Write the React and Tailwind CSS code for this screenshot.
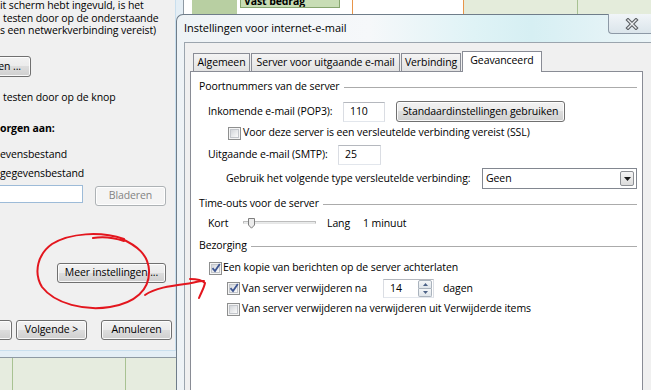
import React from 'react';

function Btn({ children, className = '', disabled = false }) {
  return (
    <div
      className={`flex shrink-0 items-center justify-center whitespace-nowrap rounded-[3px] border ${
        disabled
          ? 'border-[#adb2b5] bg-[#f4f4f4] text-[#838383]'
          : 'border-[#707070] bg-[linear-gradient(#f2f2f2_0%,#ebebeb_49%,#dddddd_50%,#cfcfcf_100%)] text-black'
      } shadow-[inset_0_0_0_1px_rgba(255,255,255,0.85)] ${className}`}
    >
      {children}
    </div>
  );
}

function Check({ checked }) {
  return (
    <span className="flex h-[13px] w-[13px] shrink-0 items-center justify-center border border-[#8e8f8f] bg-[#f4f4f4]">
      <span className="relative block h-[9px] w-[9px] border border-[#c3c6cb] bg-[linear-gradient(135deg,#d3d6da,#fbfbfb)]">
        {checked && (
          <svg className="absolute left-[-1px] top-[-2px] overflow-visible" width="10" height="10" viewBox="0 0 10 10">
            <path d="M1.5 5.2 L4 8 L8.8 1" fill="none" stroke="#3d5591" strokeWidth="1.8" />
          </svg>
        )}
      </span>
    </span>
  );
}

function Field({ value, className = '' }) {
  return (
    <div className={`flex shrink-0 items-center border border-[#b5b8be] border-x-[#dadde3] border-b-[#e2e6ec] bg-white ${className}`}>
      {value}
    </div>
  );
}

function GroupHeader({ title, className = '' }) {
  return (
    <div className={`flex h-[16px] items-center gap-[4px] pl-[8px] pr-[5px] ${className}`}>
      <span className="whitespace-nowrap">{title}</span>
      <span className="h-px flex-1 bg-[#ababab]" />
    </div>
  );
}

function LeftWizard() {
  return (
    <div className="absolute left-0 top-0 h-[358px] w-[184px] border-b border-r border-[#8e99a3] bg-[#e4eef5]">
      <div className="flex h-[351px] w-[176px] flex-col overflow-hidden whitespace-nowrap border-b border-r border-[#c9dfee] bg-[#f0f0f0]">
        <div className="-mt-px leading-[12.5px]">
          <div>it scherm hebt ingevuld, is het</div>
          <div className="pl-[3px]">testen door op de onderstaande</div>
          <div>s een netwerkverbinding vereist)</div>
        </div>
        <Btn className="-ml-[40px] mt-[19.5px] h-[21px] w-[71px] !justify-end pr-[9px]">en ...</Btn>
        <div className="mt-[13.5px] pl-[3px] leading-[13px]">testen door op de knop</div>
        <div className="mt-[18px] font-bold leading-[13px]">orgen aan:</div>
        <div className="mt-[13px] leading-[13px]">evensbestand</div>
        <div className="mt-[6px] leading-[13px]">gegevensbestand</div>
        <div className="mt-[5.5px] flex items-start">
          <div className="-ml-[20px] h-[18px] w-[103px] border border-[#9dbbd8] bg-white" />
          <Btn disabled className="ml-[12px] mt-px h-[20px] w-[71px]">Bladeren</Btn>
        </div>
        <Btn className="ml-[57px] mt-[57px] h-[20px] w-[109px]">Meer instellingen ...</Btn>
        <div className="mt-[37px] flex">
          <Btn className="-ml-[60px] h-[20px] w-[72px]">&lt; Vorige</Btn>
          <Btn className="ml-[4px] h-[20px] w-[71px]">Volgende &gt;</Btn>
          <Btn className="ml-[14px] h-[20px] w-[71px]">Annuleren</Btn>
        </div>
      </div>
    </div>
  );
}

function MailSettings() {
  return (
    <div className="absolute left-[176px] top-[14px] flex h-[380px] w-[480px] flex-col rounded-tl-[7px] border-l border-t border-[#6f7d8a] bg-[linear-gradient(90deg,#eef3f6_0%,#f6f8fa_40%,#dff3f6_62%,#d6eff3_74%,#edf5f8_100%)]">
      <div className="flex h-[27px] shrink-0 items-center whitespace-nowrap pl-[7px] text-[11px] tracking-[-0.05px]">Instellingen voor internet-e-mail</div>
      <div className="absolute left-[431px] top-[-1px] flex h-[20px] w-[47px] items-center justify-center rounded-bl-[4px] border-b border-l border-[#8d99a6] bg-[linear-gradient(#f1f5f8,#dbe5eb)]">
        <svg width="14" height="12" viewBox="0 0 14 12">
          <path d="M3 2 L11 10 M11 2 L3 10" stroke="#5b5f63" strokeWidth="3.6" strokeLinecap="square" />
          <path d="M3 2 L11 10 M11 2 L3 10" stroke="#eceff1" strokeWidth="1.4" strokeLinecap="square" />
        </svg>
      </div>

      <div className="ml-[7px] flex flex-1 flex-col border-l border-t border-[#9ba5ae] bg-[#f0f0f0] pl-[5px] pt-[10px]">
        <div className="relative z-10 ml-[3px] flex h-[18px] items-end gap-px whitespace-nowrap">
          <div className="flex h-[18px] w-[57px] items-center justify-center border-x border-t border-[#898c95] bg-[linear-gradient(#f4f4f4,#e2e2e2)]">Algemeen</div>
          <div className="flex h-[18px] w-[149px] items-center justify-center border-x border-t border-[#898c95] bg-[linear-gradient(#f4f4f4,#e2e2e2)]">Server voor uitgaande e-mail</div>
          <div className="flex h-[18px] w-[60px] items-center justify-center border-x border-t border-[#898c95] bg-[linear-gradient(#f4f4f4,#e2e2e2)]">Verbinding</div>
          <div className="-mb-px flex h-[21px] w-[80px] items-center justify-center border-x border-t border-[#898c95] bg-white pb-[2px]">Geavanceerd</div>
        </div>

        <div className="flex w-[453px] flex-1 flex-col whitespace-nowrap border border-[#898c95] bg-white">
          <GroupHeader title="Poortnummers van de server" className="mt-[7px]" />

          <div className="mt-[6px] flex h-[21px] items-center">
            <div className="w-[152px] pl-[17px]">Inkomende e-mail (POP3):</div>
            <Field value="110" className="h-[20px] w-[42px] pl-[6px]" />
            <Btn className="ml-[11px] h-[21px] w-[169px]">Standaardinstellingen gebruiken</Btn>
          </div>

          <div className="mt-[2px] flex h-[18px] items-center gap-[2px] pl-[37px]">
            <Check />
            <span>Voor deze server is een versleutelde verbinding vereist (SSL)</span>
          </div>

          <div className="mt-[3px] flex h-[20px] items-center">
            <div className="w-[147px] pl-[17px]">Uitgaande e-mail (SMTP):</div>
            <Field value="25" className="h-[20px] w-[43px] pl-[6px]" />
          </div>

          <div className="mt-[3px] flex h-[21px] items-center">
            <div className="w-[291px] pl-[35px]">Gebruik het volgende type versleutelde verbinding:</div>
            <div className="flex h-[21px] w-[155px] items-center justify-between border border-[#828790] bg-white pl-[3px] pr-[2px]">
              <span>Geen</span>
              <span className="flex h-[15px] w-[14px] items-center justify-center rounded-[2px] border border-[#8d9095] bg-[linear-gradient(#f5f5f5,#dcdcdc)]">
                <svg width="7" height="4" viewBox="0 0 7 4">
                  <path d="M0 0 H7 L3.5 4 Z" fill="#1b1b1b" />
                </svg>
              </span>
            </div>
          </div>

          <GroupHeader title="Time-outs voor de server" className="mt-[7px]" />

          <div className="mt-[3px] flex h-[18px] items-center">
            <div className="w-[52px] pl-[17px]">Kort</div>
            <div className="relative h-[18px] w-[84px]">
              <div className="absolute left-0 top-[6px] h-[3px] w-[73px] rounded-[1px] border border-[#bcbcbc] border-b-[#e6e6e6] bg-[#e9ebeb]" />
              <svg className="absolute left-[5px] top-[3px]" width="7" height="11" viewBox="0 0 7 11">
                <path d="M0.5 0.5 H6.5 V7 L3.5 10.2 L0.5 7 Z" fill="#ececec" stroke="#7e7e7e" />
              </svg>
            </div>
            <div className="w-[36px]">Lang</div>
            <div>1 minuut</div>
          </div>

          <GroupHeader title="Bezorging" className="mt-[5px]" />

          <div className="mt-[5px] flex h-[18px] items-center gap-px pl-[18px]">
            <Check checked />
            <span>Een kopie van berichten op de server achterlaten</span>
          </div>

          <div className="mt-[2px] flex h-[19px] items-center">
            <div className="flex w-[192px] items-center gap-[2px] pl-[36px]">
              <Check checked />
              <span>Van server verwijderen na</span>
            </div>
            <div className="flex h-[19px] w-[51px] items-center justify-between border border-[#b5b8be] border-x-[#dadde3] border-b-[#e2e6ec] bg-white pl-[6px] pr-px">
              <span>14</span>
              <span className="flex h-[17px] w-[14px] flex-col">
                <span className="flex flex-1 items-center justify-center rounded-t-[2px] border border-[#aab3bd] bg-[linear-gradient(#f4f6f8,#dfe5ea)]">
                  <svg width="5" height="3" viewBox="0 0 5 3"><path d="M0 3 H5 L2.5 0 Z" fill="#4c6287" /></svg>
                </span>
                <span className="flex flex-1 items-center justify-center rounded-b-[2px] border border-t-0 border-[#aab3bd] bg-[linear-gradient(#f4f6f8,#dfe5ea)]">
                  <svg width="5" height="3" viewBox="0 0 5 3"><path d="M0 0 H5 L2.5 3 Z" fill="#4c6287" /></svg>
                </span>
              </span>
            </div>
            <span className="ml-[9px]">dagen</span>
          </div>

          <div className="mt-[2px] flex h-[18px] items-center gap-[2px] pl-[36px]">
            <Check />
            <span>Van server verwijderen na verwijderen uit Verwijderde items</span>
          </div>
        </div>
      </div>
    </div>
  );
}

function Annotation() {
  return (
    <svg className="pointer-events-none absolute left-0 top-0 z-20" width="651" height="390" viewBox="0 0 651 390">
      <g fill="none" stroke="#e3161e" strokeWidth="2" strokeLinecap="round" strokeLinejoin="round">
        <path d="M124 239 C100 231, 70 233, 52 244 C38 254, 33 272, 42 287 C55 304, 85 311, 110 307 C135 303, 150 290, 149 270 C148 255, 138 246, 120 238" />
        <path d="M93 238 C105 236, 115 238, 124 241" />
        <path d="M145 295 C155 288, 170 286, 185 284 C193 283, 198 281, 204 281" />
        <path d="M190 279 C196 279, 202 280, 205 283 C204 288, 201 293, 199 298" />
      </g>
    </svg>
  );
}

export default function App() {
  return (
    <div className="relative h-[390px] w-[651px] overflow-hidden bg-[#e6ecdf] font-['Open_Sans','Noto_Sans',sans-serif] text-[10.5px] tracking-[-0.1px] text-black">
      {/* werkblad achter de vensters */}
      <div className="absolute left-[12px] top-[356px] h-[40px] w-px bg-[#a8c292]" />
      <div className="absolute left-[125px] top-[356px] h-[40px] w-px bg-[#a8c292]" />
      <div className="absolute left-[184px] top-0 flex h-[14px] w-[467px]">
        <div className="w-[8px] bg-white" />
        <div className="w-[45px] bg-[#b8cfa2]" />
        <div className="w-[3px] bg-white" />
        <div className="flex w-[100px] flex-col bg-white">
          <div className="h-[8px] overflow-hidden border-x border-b border-[#86a56f] bg-[#c8ddb5] pl-[3px] font-bold leading-[12px]">
            <div className="-mt-[5px]">Vast bedrag</div>
          </div>
        </div>
        <div className="w-[12px] bg-white" />
        <div className="w-px bg-[#e8954a]" />
        <div className="w-[110px] bg-white" />
        <div className="w-px bg-[#e8954a]" />
        <div className="w-[113px] bg-[#e4ecdb]" />
        <div className="w-px bg-[#a7c192]" />
        <div className="flex-1 bg-[#e4ecdb]" />
      </div>
      <LeftWizard />
      <MailSettings />
      <Annotation />
    </div>
  );
}
